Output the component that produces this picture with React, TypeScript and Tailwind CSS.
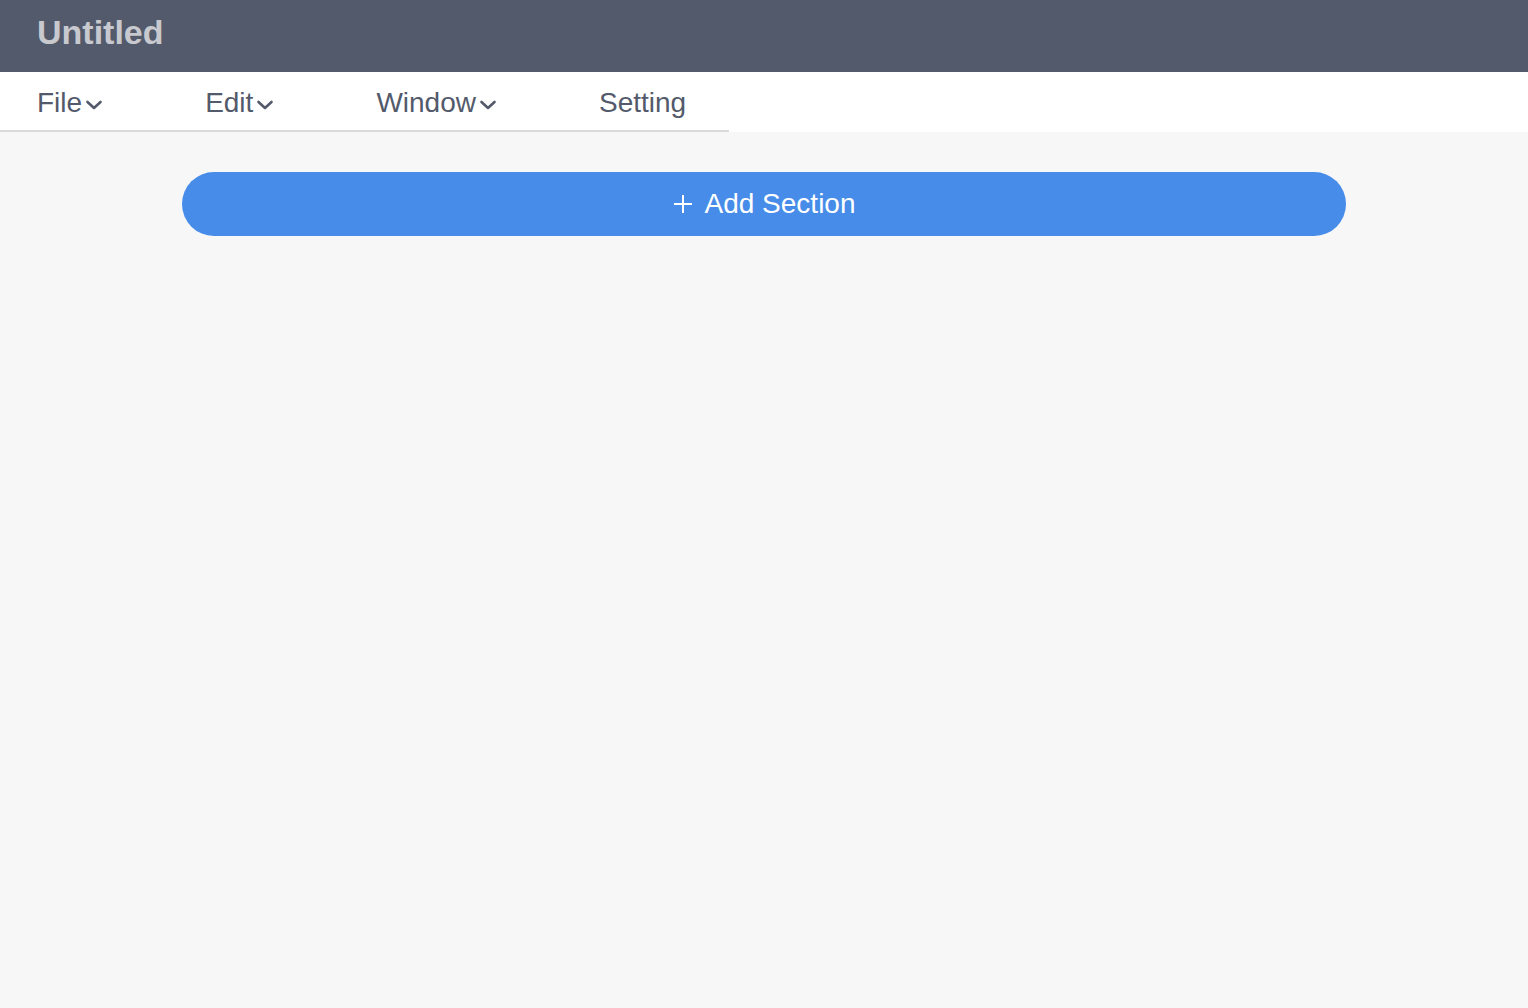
const menu = [
  { label: 'File', caret: true },
  { label: 'Edit', caret: true },
  { label: 'Window', caret: true },
  { label: 'Setting', caret: false }
];

function Caret() {
  return (
    <svg width="18" height="12" viewBox="0 0 18 12" className="ml-[3px] mt-[4px]">
      <path d="M2.5 3l6.5 6 6.5-6" fill="none" stroke="currentColor" strokeWidth="2.6" strokeLinecap="round" strokeLinejoin="round" />
    </svg>
  );
}

export default function App() {
  return (
    <div className="min-h-screen bg-[#f7f7f7] font-['Liberation_Sans',Arial,sans-serif]">
      <header className="flex h-[72px] items-center bg-[#535a6b] pl-[37px]">
        <h1 className="text-[34px] font-bold leading-none text-[#c8c9cf] -mt-[8px]">Untitled</h1>
      </header>

      <div className="flex h-[60px] bg-white">
        <nav className="flex h-full items-center gap-[102px] border-b-2 border-[#d9d9dc] pl-[37px] pr-[43px] pt-[3px] text-[#535a6b]">
          {menu.map(item => (
            <button key={item.label} className="flex items-center text-[28px] leading-none">
              {item.label}
              {item.caret && <Caret />}
            </button>
          ))}
        </nav>
      </div>

      <main className="px-[182px] pt-[40px]">
        <button className="flex h-[64px] w-full items-center justify-center gap-[12px] rounded-full bg-[#468ce8] text-[28px] text-white">
          <svg width="20" height="20" viewBox="0 0 20 20">
            <path d="M10 1v18M1 10h18" stroke="currentColor" strokeWidth="2" />
          </svg>
          Add Section
        </button>
      </main>
    </div>
  );
}
